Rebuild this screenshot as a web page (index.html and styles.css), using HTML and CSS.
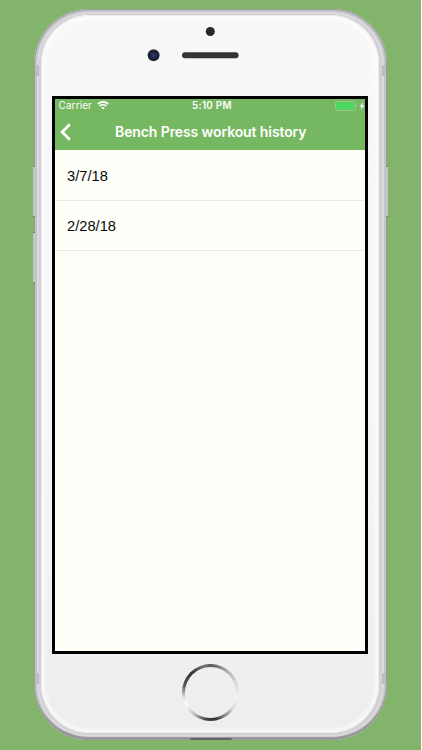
FILE: index.html
```
<!DOCTYPE html>
<html lang="en">
<head>
<meta charset="utf-8">
<title>Workout history</title>
<link rel="stylesheet" href="styles.css">
</head>
<body>
<main class="stage">
  <div class="phone">
    <span class="key key-up"></span>
    <span class="key key-down"></span>
    <span class="key key-power"></span>
    <span class="band band-tl"></span>
    <span class="band band-tr"></span>
    <span class="band band-bl"></span>
    <span class="band band-br"></span>
    <span class="port"></span>
    <div class="face">
      <div class="forehead">
        <svg width="120" height="40" viewBox="0 0 120 40">
          <defs>
            <radialGradient id="lens"><stop offset="0" stop-color="#34408a"/><stop offset=".45" stop-color="#20264f"/><stop offset=".7" stop-color="#1b2028"/><stop offset="1" stop-color="#30363b"/></radialGradient>
          </defs>
          <circle cx="70.3" cy="7.5" r="4.5" fill="#282828"/>
          <circle cx="13.6" cy="31.3" r="6" fill="url(#lens)"/>
          <rect x="42" y="28.3" width="56.6" height="6" rx="3" fill="#343434"/>
        </svg>
      </div>
      <section class="screen">
        <header class="top">
          <div class="status">
            <span class="carrier">Carrier</span>
            <svg class="wifi" width="12" height="9" viewBox="0 0 12 9">
              <path d="M0.7 3.1Q6-1.5 11.3 3.1M2.6 5.1Q6 2.2 9.4 5.1" fill="none" stroke="#fff" stroke-width="1.7"/>
              <path d="M4.2 6.7Q6 5.3 7.8 6.7L6 8.6Z" fill="#fff"/>
            </svg>
            <span class="clock">5:10 PM</span>
            <svg class="battery" width="30" height="10" viewBox="0 0 30 10">
              <rect x=".5" y=".5" width="20" height="9" rx="2" fill="none" stroke="#98cb89"/>
              <rect x="1.5" y="1.5" width="18" height="7" rx="1" fill="#4bd964"/>
              <path d="M21.7 3.5q1.2 1.5 0 3z" fill="#a9d29d"/>
              <path d="M28 1.3L24.8 5.4H26.7L25.8 9L29.4 4.5H27.4Z" fill="#fff"/>
            </svg>
          </div>
          <div class="nav">
            <svg class="back" width="12" height="18" viewBox="0 0 12 18"><path d="M9.8 1.2L2.2 9L9.8 16.8" fill="none" stroke="#fff" stroke-width="2.8"/></svg>
            <h1 class="title">Bench Press workout history</h1>
          </div>
        </header>
        <ul class="list">
          <li class="row">3/7/18</li>
          <li class="row">2/28/18</li>
        </ul>
      </section>
      <div class="chin"><span class="home"></span></div>
    </div>
  </div>
</main>
</body>
</html>
```
FILE: styles.css
```
* { box-sizing: border-box; }
body { margin: 0; background: #82b46c; font-family: Inter, "Liberation Sans", sans-serif; }
.stage {
  width: 422px;
  height: 750px;
  padding: 9px 0 0 34px;
  border-right: 1px solid #fff;
  overflow: hidden;
}
.phone {
  position: relative;
  width: 353px;
  height: 731px;
  padding: 6px 8px 7px 7px;
  border-radius: 55px;
  background: #d2d2d5;
  box-shadow: inset 0 0 0 1px #999b9b, inset 0 -3px 1px #959597, inset 0 0 1px 3px #c3c4c7, inset 0 0 0 5px #dcdce0, inset 0 0 0 6px #d0d0d4;
}
.face {
  display: flex;
  flex-direction: column;
  align-items: center;
  height: 718px;
  border-radius: 49px;
  background: linear-gradient(#f8f8f8, #f5f5f5 60%, #eee 96%);
  box-shadow: inset 0 0 0 1px #ececee, inset 0 0 4px 3px #fdfdfd;
}
.forehead { width: 316px; height: 81px; padding: 9px 0 0 88px; }
.forehead svg { display: block; }
.screen {
  width: 316px;
  height: 558px;
  border: 3px solid #000;
  background: #fffffa;
}
.top { height: 51px; background: #76b761; color: #fff; }
.status { display: flex; align-items: center; height: 13px; padding: 0 0 0 3.5px; }
.carrier { width: 38px; font-size: 10px; line-height: 13px; letter-spacing: .1px; }
.clock { flex: 1; padding-left: 83.5px; font-size: 9.8px; font-weight: 600; letter-spacing: .3px; line-height: 13px; white-space: nowrap; }
.nav { display: flex; align-items: center; height: 38px; padding-left: 5px; }
.title { width: 210px; margin: 2px 0 0 43px; font-size: 14px; font-weight: 600; line-height: 20px; letter-spacing: -.1px; white-space: nowrap; }
.back { margin-top: 1px; }
.list { margin: 0; padding: 0; list-style: none; font: 14.7px/50px "Liberation Sans", sans-serif; color: #080808; }
.row { height: 50px; padding-left: 12px; border-bottom: 1px solid #e9e9e6; }
.row:first-child { height: 51px; line-height: 52px; }
.chin { display: flex; justify-content: center; width: 316px; padding: 10px 0 0; }
.home {
  width: 57px;
  height: 57px;
  border: 3px solid transparent;
  border-radius: 50%;
  background: linear-gradient(#efefef, #eee) padding-box,
    conic-gradient(#555, #aaa 35deg, #d4d4d4 65deg, #f4f4f4 100deg, #ddd 125deg, #333 170deg, #444 190deg, #bbb 215deg, #fff 245deg, #ddd 260deg, #555 285deg, #333 315deg, #777 345deg, #555) border-box;
}
.key { position: absolute; width: 2px; height: 51px; background: #c5c7c6; border-top: 1px solid #7b867b; border-bottom: 1px solid #7b867b; }
.key-up { left: -1px; top: 157px; }
.key-down { left: -1px; top: 223px; }
.key-power { right: -1px; top: 157px; }
.band { position: absolute; width: 4px; height: 11px; background: #bebec2; }
.band-tl { left: 1px; top: 56px; }
.band-tr { right: 1px; top: 56px; }
.band-bl { left: 1px; top: 664px; }
.band-br { right: 1px; top: 664px; }
.port { position: absolute; left: 156px; bottom: 0; width: 42px; height: 2px; border-radius: 2px 2px 0 0; background: #636363; }
```
